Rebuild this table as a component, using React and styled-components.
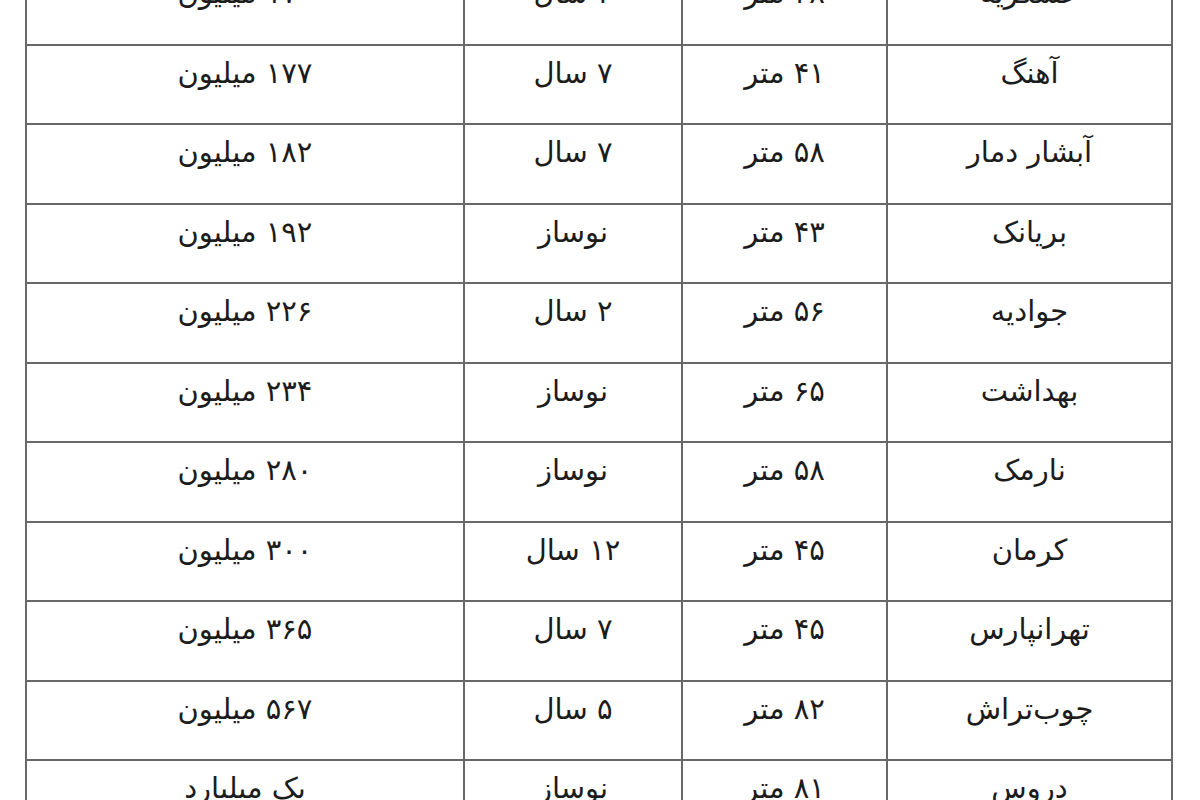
import React from 'react';
import styled, { createGlobalStyle } from 'styled-components';

const GlobalStyle = createGlobalStyle`
  html, body {
    margin: 0;
    padding: 0;
    background: #ffffff;
    overflow: hidden;
  }
  body {
    font-family: "DejaVu Sans", "Noto Sans", sans-serif;
    color: #1a1a1a;
  }
`;

const Page = styled.div`
  width: 1200px;
  height: 800px;
  overflow: hidden;
  direction: rtl;
  display: flex;
  justify-content: flex-start;
  padding-right: 27px;
  box-sizing: border-box;
`;

const Table = styled.table`
  border-collapse: collapse;
  width: 1146px;
  margin-top: -36px;
  table-layout: fixed;
`;

const Cell = styled.td`
  width: ${({ w }) => w}px;
  height: 79.5px;
  box-sizing: border-box;
  border: 2px solid #686868;
  text-align: center;
  vertical-align: top;
  padding: 9px 6px 0;
  font-size: 29px;
  line-height: 36px;
  color: #1c1c1c;
  white-space: nowrap;
`;

const widths = [285, 205, 218, 438];

const rows = [
  ['عسکریه', '۴۸ متر', '۲ سال', '۱۷۰ میلیون'],
  ['آهنگ', '۴۱ متر', '۷ سال', '۱۷۷ میلیون'],
  ['آبشار دمار', '۵۸ متر', '۷ سال', '۱۸۲ میلیون'],
  ['بریانک', '۴۳ متر', 'نوساز', '۱۹۲ میلیون'],
  ['جوادیه', '۵۶ متر', '۲ سال', '۲۲۶ میلیون'],
  ['بهداشت', '۶۵ متر', 'نوساز', '۲۳۴ میلیون'],
  ['نارمک', '۵۸ متر', 'نوساز', '۲۸۰ میلیون'],
  ['کرمان', '۴۵ متر', '۱۲ سال', '۳۰۰ میلیون'],
  ['تهرانپارس', '۴۵ متر', '۷ سال', '۳۶۵ میلیون'],
  ['چوب‌تراش', '۸۲ متر', '۵ سال', '۵۶۷ میلیون'],
  ['دروس', '۸۱ متر', 'نوساز', 'یک میلیارد'],
];

export default function App() {
  return (
    <Page>
      <GlobalStyle />
      <Table>
        <tbody>
          {rows.map((row, i) => (
            <tr key={i}>
              {row.map((text, j) => (
                <Cell key={j} w={widths[j]}>{text}</Cell>
              ))}
            </tr>
          ))}
        </tbody>
      </Table>
    </Page>
  );
}
